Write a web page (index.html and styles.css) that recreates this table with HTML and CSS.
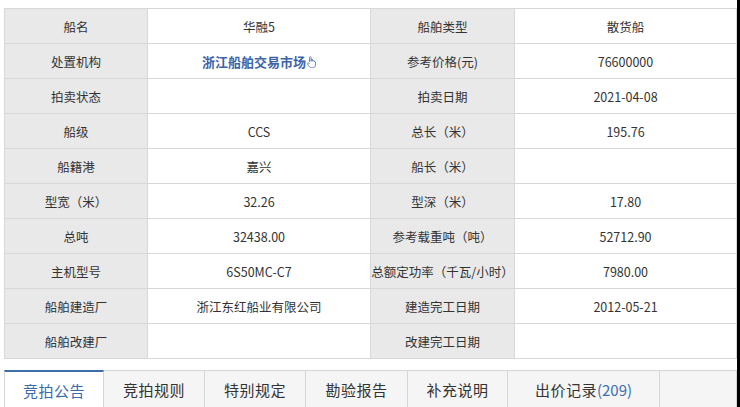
FILE: index.html
```html
<!DOCTYPE html>
<html lang="zh">
<head>
<meta charset="utf-8">
<link rel="stylesheet" href="styles.css">
</head>
<body>
<div class="page">
  <table class="info">
    <colgroup><col class="c1"><col class="c2"><col class="c3"><col class="c4"></colgroup>
    <tr><th>船名</th><td>华融5</td><th>船舶类型</th><td>散货船</td></tr>
    <tr><th>处置机构</th><td><span class="link">浙江船舶交易市场<svg class="hand" width="9" height="12" viewBox="0 0 9 12"><path d="M2.5 6V1.5a.8.8 0 0 1 1.6 0V5.5M4.1 5V4a.8.8 0 0 1 1.6 0v1.2M5.7 5.2a.8.8 0 0 1 1.6 0v.6a.7.7 0 0 1 1.2.3V9c0 1.600-1.2 2.6-2.8 2.6H4.4C3 11.6 2.2 10.6 1.4 9.4L.6 8a.8.8 0 0 1 1.3-.9l.6.8" fill="none" stroke="#4a6fb0" stroke-width=".8"/></svg></span></td><th>参考价格(元)</th><td>76600000</td></tr>
    <tr><th>拍卖状态</th><td></td><th>拍卖日期</th><td>2021-04-08</td></tr>
    <tr><th>船级</th><td>CCS</td><th>总长（米）</th><td>195.76</td></tr>
    <tr><th>船籍港</th><td>嘉兴</td><th>船长（米）</th><td></td></tr>
    <tr><th>型宽（米）</th><td>32.26</td><th>型深（米）</th><td>17.80</td></tr>
    <tr><th>总吨</th><td>32438.00</td><th>参考载重吨（吨）</th><td>52712.90</td></tr>
    <tr><th>主机型号</th><td>6S50MC-C7</td><th>总额定功率（千瓦/小时）</th><td>7980.00</td></tr>
    <tr><th>船舶建造厂</th><td>浙江东红船业有限公司</td><th>建造完工日期</th><td>2012-05-21</td></tr>
    <tr><th>船舶改建厂</th><td></td><th>改建完工日期</th><td></td></tr>
  </table>
  <div class="tabs">
    <div class="tab active w1">竞拍公告</div>
    <div class="tab w2">竞拍规则</div>
    <div class="tab w2">特别规定</div>
    <div class="tab w3">勘验报告</div>
    <div class="tab w4">补充说明</div>
    <div class="tab w5">出价记录<span class="num">(209)</span></div>
    <div class="tab rest"></div>
  </div>
</div>
<div class="edge"></div>
</body>
</html>
```
FILE: styles.css
```css
html, body {
  margin: 0;
  padding: 0;
  background: #fff;
}
body {
  font-family: "Noto Sans CJK SC", "Liberation Sans", sans-serif;
  color: #333;
  width: 740px;
  height: 407px;
  overflow: hidden;
  position: relative;
}
.page {
  padding: 8px 0 0 4px;
  width: 733px;
}
.info {
  border-collapse: collapse;
  table-layout: fixed;
  width: 733px;
  font-size: 12.5px;
}
.c1 { width: 143px; }
.c2 { width: 223px; }
.c3 { width: 144px; }
.c4 { width: 222px; }
.info th, .info td {
  height: 34px;
  padding: 0;
  border: 1px solid #d8d8d8;
  text-align: center;
  font-weight: normal;
  white-space: nowrap;
  overflow: hidden;
}
.info th {
  background: #e9e9e9;
}
.info td {
  background: #fff;
}
.link {
  color: #3d64a6;
  font-weight: bold;
  font-size: 13px;
}
.hand {
  vertical-align: -1px;
  margin-left: 1px;
}
.tabs {
  display: flex;
  margin-top: 11px;
  height: 37px;
  border-top: 1px solid #d6d6d6;
  border-bottom: 1px solid #d6d6d6;
  background: #f5f5f5;
}
.tab {
  display: flex;
  align-items: center;
  justify-content: center;
  font-size: 15px;
  color: #333;
  border-right: 1px solid #d6d6d6;
  box-sizing: border-box;
  letter-spacing: 0.5px;
}
.tab.active {
  background: #fff;
  color: #3a6aa8;
  border-top: 2px solid #3d6ea8;
  margin-top: -1px;
  border-left: 1px solid #d6d6d6;
}
.w1 { width: 100px; }
.w2 { width: 101px; }
.w3 { width: 102px; }
.w4 { width: 100px; }
.w5 { width: 152px; }
.rest { flex: 1; border-right: 1px solid #d6d6d6; }
.num { color: #3d6eb0; letter-spacing: 0; }
.edge {
  position: absolute;
  top: 0;
  right: 0;
  width: 3px;
  height: 407px;
  background: #000;
}
```
